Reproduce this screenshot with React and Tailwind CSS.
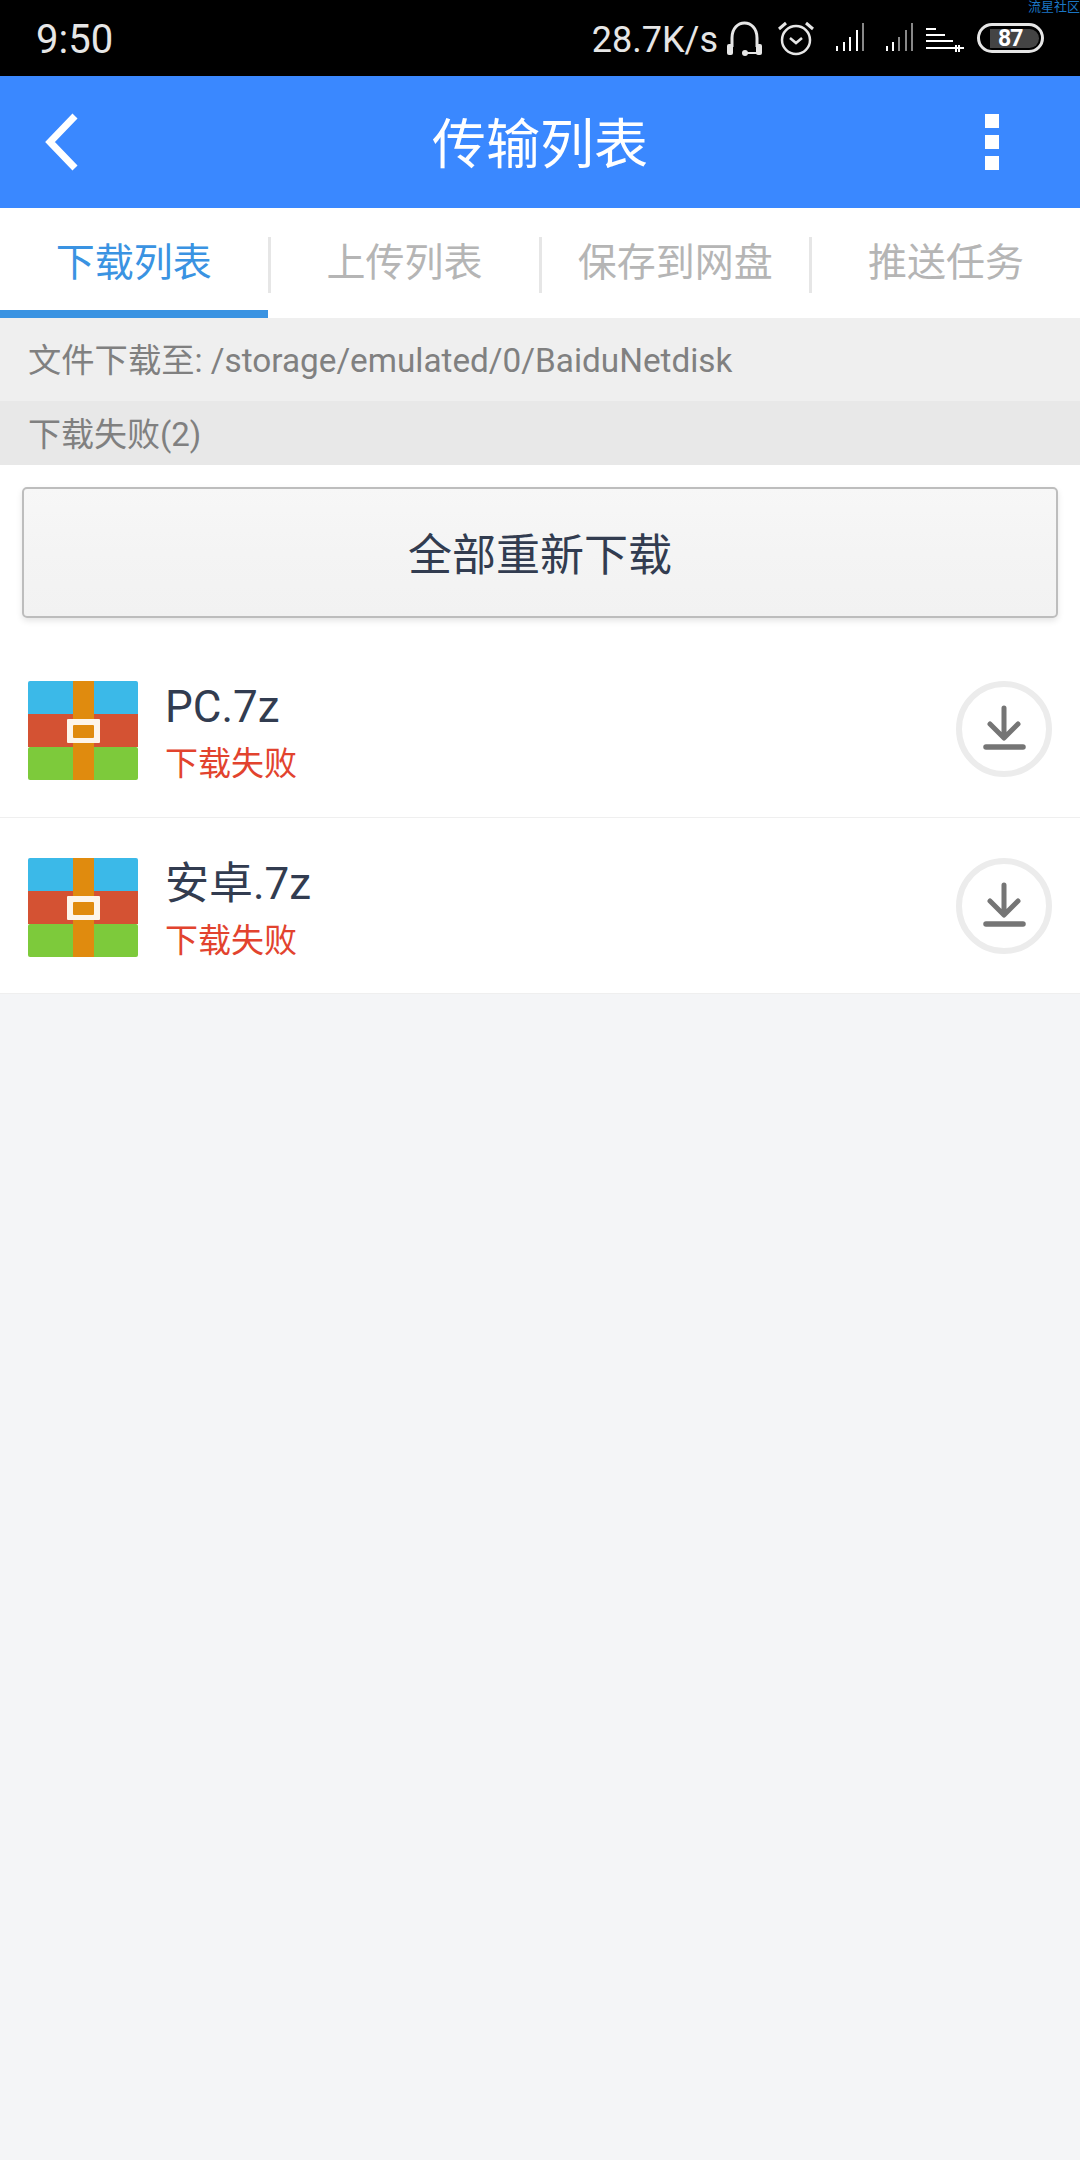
const FONT = "font-['Roboto','Noto_Sans_CJK_SC',sans-serif]";

function ArchiveIcon() {
  return (
    <svg width="110" height="99" viewBox="0 0 110 99" className="shrink-0 ml-[1px]">
      <rect x="0" y="0" width="110" height="36" rx="2" fill="#3bb9e8" />
      <rect x="0" y="66" width="110" height="33" rx="2" fill="#7dca3b" />
      <rect x="0" y="33" width="110" height="33" fill="#d45233" />
      <rect x="45" y="0" width="21" height="99" fill="#e08b0e" />
      <rect x="39" y="38" width="33" height="24" rx="1" fill="#fdf5ea" />
      <rect x="45" y="44" width="21" height="13" rx="1" fill="#e08b0e" />
    </svg>
  );
}

function RetryIcon() {
  return (
    <svg width="96" height="96" viewBox="0 0 96 96" className="shrink-0">
      <circle cx="48" cy="48" r="45" fill="#ffffff" stroke="#ececec" strokeWidth="6" />
      <path d="M48 27V56M34 43L48 57L62 43" fill="none" stroke="#757575" strokeWidth="5" strokeLinecap="round" strokeLinejoin="round" />
      <path d="M30 66H67" stroke="#757575" strokeWidth="5.5" strokeLinecap="round" />
    </svg>
  );
}

function StatusIcons() {
  return (
    <svg width="237" height="40" viewBox="0 0 237 40" className="shrink-0 text-[#e6e6e6]">
      {/* headset */}
      <path d="M5 29V20C5 0 30 0 30 20V29" fill="none" stroke="currentColor" strokeWidth="3" />
      <rect x="0" y="26" width="6" height="11" rx="2" fill="currentColor" />
      <rect x="29" y="26" width="6" height="11" rx="2" fill="currentColor" />
      <circle cx="18" cy="35" r="3" fill="currentColor" />
      <path d="M18 35H30" stroke="currentColor" strokeWidth="2" />
      {/* alarm */}
      <circle cx="69" cy="22" r="14" fill="none" stroke="currentColor" strokeWidth="2.5" />
      <path d="M63 20L69 25L75 20" fill="none" stroke="currentColor" strokeWidth="2.5" />
      <path d="M52 11L59 5M86 11L79 5" stroke="currentColor" strokeWidth="3" />
      {/* signal */}
      <path d="M110 28V33M117 24V33M123 19V33M130 12V33" stroke="#ffffff" strokeWidth="2" />
      <path d="M136 5V33" stroke="#888888" strokeWidth="2" />
      <path d="M160 28V33M166 24V33" stroke="#ffffff" strokeWidth="2" />
      <path d="M172 19V33M179 12V33M185 5V33" stroke="#888888" strokeWidth="2" />
      {/* wifi lines */}
      <path d="M199 11H209M199 17H218M199 23H226M199 30H237" stroke="#ffffff" strokeWidth="2" />
      <path d="M229 27V34M232 27V34" stroke="#ffffff" strokeWidth="2" />
    </svg>
  );
}

function Tab({ label, active }) {
  return (
    <div className="relative flex-1 h-full flex items-center justify-center">
      <span className={`text-[39px] pt-[1px] ${active ? 'text-[#3a93e2]' : 'text-[#b5b5b5]'}`}>{label}</span>
      {active && <span className="absolute left-0 right-0 bottom-0 h-[8px] bg-[#3a93e2]" />}
    </div>
  );
}

function TabDivider() {
  return <span className="w-[3px] h-[56px] mt-[29px] bg-[#e6e6e6]" />;
}

function FileRow({ name, className }) {
  return (
    <div className={`flex items-start pt-[40px] pl-[27px] pr-[28px] bg-white ${className}`}>
      <ArchiveIcon />
      <div className="flex-1 ml-[27px]">
        <div className="pt-[2px] text-[44px] leading-[48px] text-[#323c50]">{name}</div>
        <div className="mt-[11px] text-[33px] leading-[44px] text-[#e2432e]">下载失败</div>
      </div>
      <RetryIcon />
    </div>
  );
}

export default function App() {
  return (
    <div className={`${FONT} relative w-[1080px] h-[2160px] bg-[#f4f5f7] flex flex-col`}>
      <div className="h-[76px] shrink-0 bg-black flex items-center justify-between pl-[36px] pr-[36px] text-[#e6e6e6] relative">
        <span className="text-[40px] pt-[3px]">9:50</span>
        <div className="flex items-center">
          <span className="text-[36px] mr-[9px] pt-[3px]">28.7K/s</span>
          <StatusIcons />
          <span className="ml-[13px] w-[67px] h-[30px] rounded-full border-[3px] border-[#e6e6e6] flex items-center pl-[10px] pr-[2px]">
            <span className="w-full h-[19px] rounded-l-[3px] rounded-r-full bg-[#444444] text-[23px] font-bold leading-[19px] pl-[8px] tracking-[-1px] text-white">87</span>
          </span>
        </div>
        <span className="absolute right-0 top-0 text-[13px] leading-[14px] text-[#1b76c4]">流星社区</span>
      </div>

      <div className="h-[132px] shrink-0 bg-[#3a88ff] flex items-center justify-between relative">
        <svg width="40" height="60" viewBox="0 0 40 60" className="ml-[43px]">
          <path d="M32 4L7 30L32 56" fill="none" stroke="#ffffff" strokeWidth="7" />
        </svg>
        <span className="absolute inset-x-0 pt-[6px] text-center text-[54px] text-white">传输列表</span>
        <div className="mr-[81px] flex flex-col gap-[7px]">
          <span className="w-[14px] h-[14px] bg-white" />
          <span className="w-[14px] h-[14px] bg-white" />
          <span className="w-[14px] h-[14px] bg-white" />
        </div>
      </div>

      <div className="h-[110px] shrink-0 bg-white flex">
        <Tab label="下载列表" active />
        <TabDivider />
        <Tab label="上传列表" />
        <TabDivider />
        <Tab label="保存到网盘" />
        <TabDivider />
        <Tab label="推送任务" />
      </div>

      <div className="h-[83px] shrink-0 bg-[#efefef] flex items-center pl-[28px] pt-[3px] text-[33.3px] text-[#808080]">
        文件下载至: /storage/emulated/0/BaiduNetdisk
      </div>
      <div className="h-[64px] shrink-0 bg-[#e8e8e8] flex items-center pl-[28px] pt-[3px] text-[33px] text-[#808080]">
        下载失败(2)
      </div>

      <div className="bg-white pt-[22px] px-[22px] pb-[23px]">
        <div className="h-[131px] pt-[6px] rounded-[5px] border-2 border-[#bdbdbd] bg-gradient-to-b from-[#f7f7f7] via-[#f4f4f4] to-[#f2f2f2] shadow-[0_3px_6px_rgba(0,0,0,0.1)] flex items-center justify-center text-[44px] text-[#323c50]">
          全部重新下载
        </div>
      </div>

      <FileRow name="PC.7z" className="h-[177px] border-b border-[#efefef]" />
      <FileRow name="安卓.7z" className="h-[176px] border-b border-[#efefef]" />
    </div>
  );
}
